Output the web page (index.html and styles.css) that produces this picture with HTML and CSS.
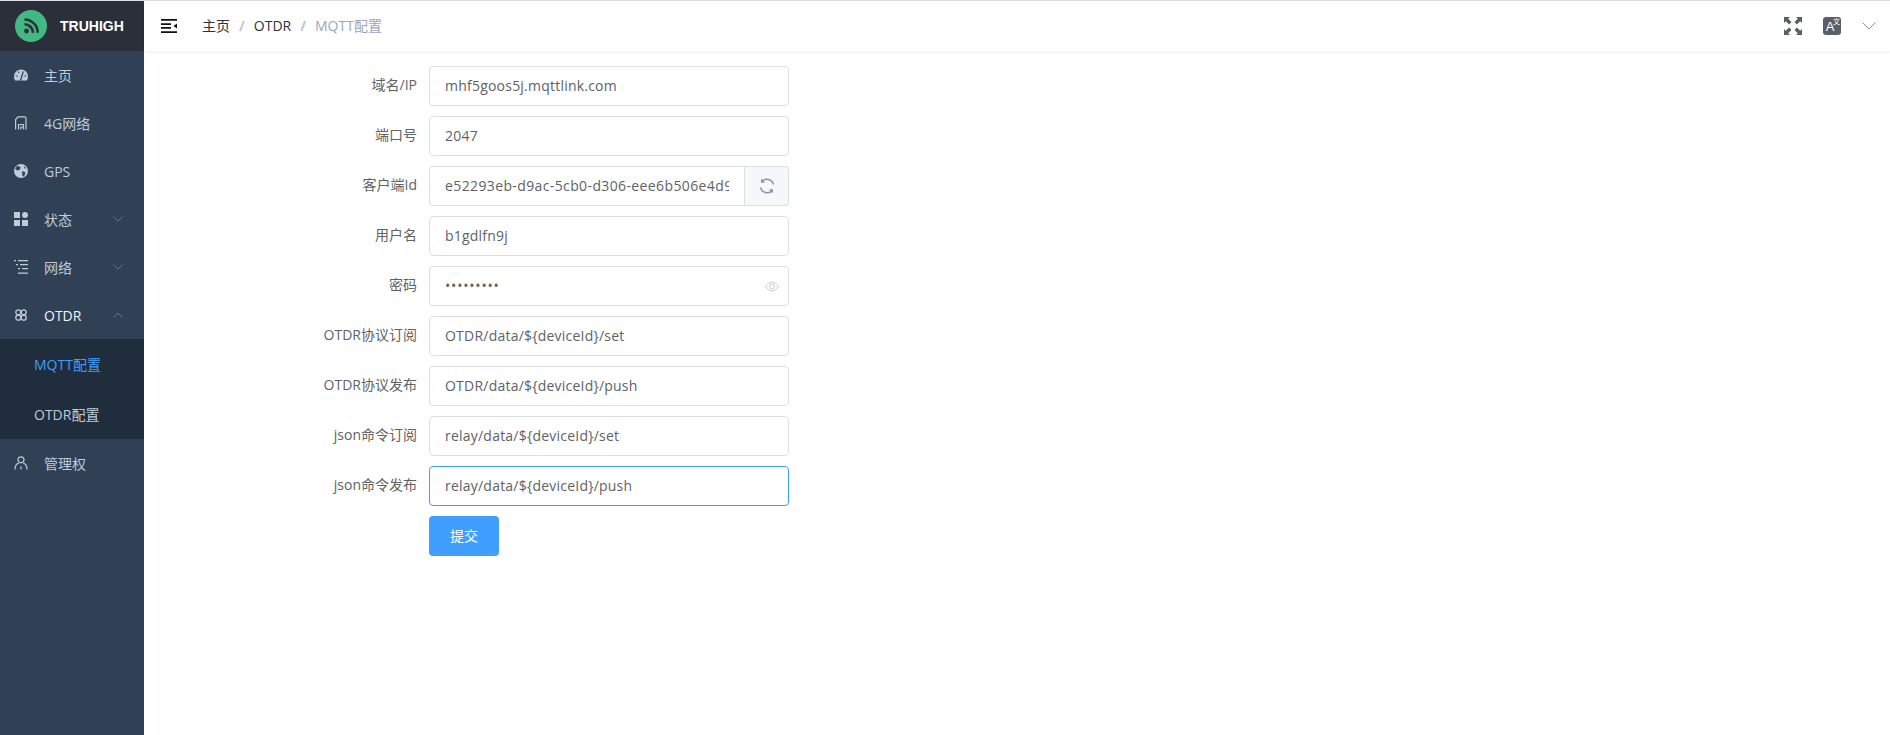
FILE: index.html
```html
<!DOCTYPE html>
<html lang="zh">
<head>
<meta charset="utf-8">
<title>MQTT配置</title>
<link rel="stylesheet" href="styles.css">
</head>
<body>
<div class="app">
  <aside class="sidebar">
    <div class="brand">
      <span class="logo">
        <svg viewBox="0 0 32 32" width="32" height="32"><circle cx="16" cy="16" r="16" fill="#42b983"/><circle cx="11.500" cy="21" r="2.400" fill="#2b2f3a"/><path d="M9.500 14.200a8.500 8.500 0 0 1 8.500 8.600M9.500 9.500a13.200 13.200 0 0 1 13.200 13.300" fill="none" stroke="#2b2f3a" stroke-width="2.600"/></svg>
      </span>
      <span class="brand-name">TRUHIGH</span>
    </div>
    <nav class="menu">
      <div class="item">
        <svg class="ico" viewBox="0 0 14 14"><path fill="currentColor" d="M7 1.500a7 7 0 0 0-7 7c0 1.700.5 3 1.200 4h11.600c.7-1 1.200-2.300 1.200-4a7 7 0 0 0-7-7z"/><path d="M6.500 12.500 9.300 3.500M1.800 8h1.700M10.500 8h1.700M4.300 3.500l.8 1.500" stroke="#304156" stroke-width="1.200" fill="none"/></svg>
        <span>主页</span>
      </div>
      <div class="item">
        <svg class="ico" viewBox="0 0 14 14"><path fill="none" stroke="currentColor" stroke-width="1.200" d="M1.600 13.500V3.500L4 .8h6.500a1.500 1.500 0 0 1 1.500 1.500v11.200"/><path fill="none" stroke="currentColor" stroke-width="1.200" d="M4.500 13.500V8.500h5v5M6.800 13.500V11h2.700"/></svg>
        <span>4G网络</span>
      </div>
      <div class="item">
        <svg class="ico" viewBox="0 0 14 14"><circle cx="7" cy="7" r="7" fill="currentColor"/><path fill="#304156" d="M3 1.800 6.500 3 6 5.500 3.500 6.500 1.200 5zM8 7l3.500 1.500-1.500 4-1.500-.5zM10 2l2 2-1.500.8z"/></svg>
        <span>GPS</span>
      </div>
      <div class="item">
        <svg class="ico" viewBox="0 0 14 14"><path fill="currentColor" d="M0 0h6v6H0zM0 8h6v6H0zM8 8h6v6H8z"/><circle cx="11" cy="3" r="3" fill="currentColor"/></svg>
        <span>状态</span>
        <svg class="chev" viewBox="0 0 10 6"><path d="M.5.500 5 5 9.500.500" fill="none" stroke="currentColor" stroke-width=".8"/></svg>
      </div>
      <div class="item">
        <svg class="ico" viewBox="0 0 14 14"><path fill="currentColor" d="M0 0h2v1.200H0zM4 0h10v1.200H4zM2 4h2v1.200H2zM6 4h8v1.200H6zM4 8h2v1.200H4zM8 8h6v1.200H8zM4 12.500h10v1.200H4z"/></svg>
        <span>网络</span>
        <svg class="chev" viewBox="0 0 10 6"><path d="M.5.500 5 5 9.500.500" fill="none" stroke="currentColor" stroke-width=".8"/></svg>
      </div>
      <div class="item open">
        <svg class="ico" viewBox="0 0 14 14"><g fill="none" stroke="currentColor" stroke-width="1.300"><circle cx="4.300" cy="4.300" r="2.500"/><circle cx="9.700" cy="4.300" r="2.500"/><circle cx="4.300" cy="9.700" r="2.500"/><circle cx="9.700" cy="9.700" r="2.500"/></g></svg>
        <span>OTDR</span>
        <svg class="chev up" viewBox="0 0 10 6"><path d="M.5 5.500 5 1l4.500 4.500" fill="none" stroke="currentColor" stroke-width=".8"/></svg>
      </div>
      <div class="submenu">
        <div class="subitem active">MQTT配置</div>
        <div class="subitem">OTDR配置</div>
      </div>
      <div class="item">
        <svg class="ico" viewBox="0 0 14 14"><g fill="none" stroke="currentColor" stroke-width="1.200"><circle cx="7" cy="3.800" r="3"/><path d="M1 13.500c0-3.500 2-6 4-6.500M13 13.500c0-3.500-2-6-4-6.500M7 10.500v3"/></g></svg>
        <span>管理权</span>
      </div>
    </nav>
  </aside>
  <div class="main">
    <header class="navbar">
      <svg class="hamburger" viewBox="0 0 16 14" width="16" height="14"><path fill="#111" d="M0 0h16v1.800H0zM0 4.200h10V6H0zM0 8h10v1.800H0zM0 12.200h16V14H0zM16 4.500v5L12.500 7z"/></svg>
      <div class="crumbs">
        <span>主页</span><i>/</i><span>OTDR</span><i>/</i><span class="last">MQTT配置</span>
      </div>
      <div class="tools">
        <svg viewBox="0 0 18 18" width="18" height="18"><path fill="#5a5e66" d="M0 0h6L4.200 1.800 7.500 5.100 5.100 7.500 1.800 4.200 0 6zM18 0v6l-1.800-1.800-3.300 3.300-2.400-2.400 3.300-3.300L12 0zM0 18v-6l1.800 1.800 3.300-3.300 2.400 2.400-3.300 3.300L6 18zM18 18h-6l1.800-1.800-3.300-3.300 2.400-2.400 3.300 3.300L18 12z"/></svg>
        <span class="lang"><b>A</b><em>文</em></span>
        <svg viewBox="0 0 14 8" width="14" height="8"><path d="M.5.500 7 7 13.500.500" fill="none" stroke="#8a8f99" stroke-width="1"/></svg>
      </div>
    </header>
    <main class="content">
      <form class="form">
        <div class="row"><label>域名/IP</label><div class="field"><input value="mhf5goos5j.mqttlink.com"></div></div>
        <div class="row"><label>端口号</label><div class="field"><input value="2047"></div></div>
        <div class="row"><label>客户端Id</label><div class="field group"><input value="e52293eb-d9ac-5cb0-d306-eee6b506e4d9f1"><span class="append"><svg viewBox="0 0 16 16" width="16" height="16"><path d="M14.500 6.500A7 7 0 0 0 2.600 3.500M1.500 9.500a7 7 0 0 0 11.900 3" fill="none" stroke="#8d929c" stroke-width="1.500"/><path fill="#8d929c" d="M2 .8v4h4zM14 15.200v-4h-4z"/></svg></span></div></div>
        <div class="row"><label>用户名</label><div class="field"><input value="b1gdlfn9j"></div></div>
        <div class="row"><label>密码</label><div class="field"><input class="secret" type="password" value="abcdefghi"><svg class="eye" viewBox="0 0 16 12" width="14" height="11"><path d="M.8 6C3 2.500 5.300 1 8 1s5 1.500 7.200 5C13 9.500 10.700 11 8 11S3 9.500.8 6z" fill="none" stroke="#c0c4cc"/><circle cx="8" cy="6" r="2.800" fill="none" stroke="#c0c4cc"/></svg></div></div>
        <div class="row"><label>OTDR协议订阅</label><div class="field"><input value="OTDR/data/${deviceId}/set"></div></div>
        <div class="row"><label>OTDR协议发布</label><div class="field"><input value="OTDR/data/${deviceId}/push"></div></div>
        <div class="row"><label>json命令订阅</label><div class="field"><input value="relay/data/${deviceId}/set"></div></div>
        <div class="row"><label>json命令发布</label><div class="field"><input class="focus" value="relay/data/${deviceId}/push"></div></div>
        <div class="row"><label></label><button type="button" class="btn">提交</button></div>
      </form>
    </main>
  </div>
</div>
</body>
</html>
```
FILE: styles.css
```css
* { box-sizing: border-box; }
html, body { margin: 0; height: 100%; }
body {
  font-family: "Open Sans", "Noto Sans CJK SC", sans-serif;
  font-size: 14px;
  color: #606266;
  background: #fff;
  overflow: hidden;
}
.app { display: flex; height: 100vh; border-top: 1px solid #dcdfe6; }
.sidebar { width: 144px; flex: none; background: #304156; color: #bfcbd9; }
.brand { height: 50px; background: #2b2f3a; display: flex; align-items: center; padding-left: 15px; }
.logo { width: 32px; height: 32px; display: flex; }
.brand-name { margin-left: 13px; font: bold 14px "Liberation Sans", sans-serif; color: #fff; }
.item { height: 48px; display: flex; align-items: center; padding-left: 14px; position: relative; }
.ico { width: 14px; height: 14px; flex: none; margin-right: 16px; }
.chev { width: 10px; height: 6px; position: absolute; left: 113px; top: 21px; color: #75818f; }
.open { color: #f4f4f5; }
.open .ico { color: #bfcbd9; }
.submenu { background: #1f2d3d; }
.subitem { height: 50px; display: flex; align-items: center; padding-left: 34px; }
.active { color: #409eff; }
.main { flex: 1; min-width: 0; }
.navbar { height: 50px; display: flex; align-items: center; box-shadow: 0 1px 4px rgba(0, 21, 41, .08); padding: 0 14px 0 17px; }
.hamburger { flex: none; }
.crumbs { margin-left: 25px; color: #303133; display: flex; align-items: center; padding-bottom: 2px; }
.crumbs i { font-style: normal; font-weight: 700; color: #c0c4cc; margin: 0 9px; }
.last { color: #97a8be; }
.tools { margin-left: auto; display: flex; align-items: center; gap: 21px; }
.lang { width: 18px; height: 18px; border-radius: 3px; background: #5a5e66; color: #fff; display: flex; align-items: center; justify-content: center; position: relative; }
.lang b { font: 13px "Liberation Sans", sans-serif; margin-right: 4px; }
.lang em { position: absolute; right: 1px; top: 1px; font: normal 7px "Noto Sans CJK SC", sans-serif; line-height: 7px; }
.form { padding: 15px 0 0 165px; }
.row { display: flex; height: 40px; margin-bottom: 10px; }
.row label { width: 120px; flex: none; padding-right: 12px; text-align: right; line-height: 38px; }
.field { width: 360px; position: relative; display: flex; }
input { flex: 1; min-width: 0; height: 40px; border: 1px solid #dcdfe6; border-radius: 4px; padding: 0 15px 2px; font: inherit; letter-spacing: .22px; color: #606266; outline: none; background: #fff; }
input.focus { border-color: #409eff; }
input.secret { letter-spacing: .8px; }
.group input { border-radius: 4px 0 0 4px; letter-spacing: .38px; }
.append { width: 44px; flex: none; border: 1px solid #dcdfe6; border-left: 0; border-radius: 0 4px 4px 0; background: #f5f7fa; display: flex; align-items: center; justify-content: center; }
.eye { position: absolute; right: 10px; top: 15px; }
.btn { width: 70px; height: 40px; border: 0; border-radius: 4px; background: #409eff; color: #fff; font: inherit; padding: 0 0 2px; }
```
